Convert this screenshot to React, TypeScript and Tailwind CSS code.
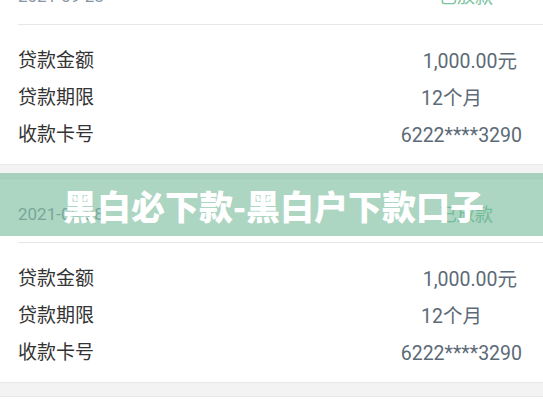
import React from 'react';

interface Row {
  label: string;
  value: string;
  pad: string;
}

const rows: Row[] = [
  { label: '贷款金额', value: '1,000.00元', pad: 'pr-[26px]' },
  { label: '贷款期限', value: '12个月', pad: 'pr-[61px]' },
  { label: '收款卡号', value: '6222****3290', pad: 'pr-[21px]' },
];

const LoanCard: React.FC<{ date: string; status: string }> = ({ date, status }) => (
  <div className="bg-white">
    <div className="h-[63px] flex items-center justify-between pl-[18px] pr-[50px] pt-[8px]">
      <span className="text-[17px] text-[#8a96a3]">{date}</span>
      <span className="text-[18px] text-[#7cc3a0]">{status}</span>
    </div>
    <div className="ml-[18px] border-t border-[#e6e6e6]" />
    <div className="pt-[18px] pb-[10px]">
      {rows.map(r => (
        <div key={r.label} className={`h-[37px] flex items-center justify-between pl-[18px] ${r.pad}`}>
          <span className="text-[19px] text-[#333333]">{r.label}</span>
          <span className="text-[19.5px] text-[#5c6a77]">{r.value}</span>
        </div>
      ))}
    </div>
    <div className="h-[15px] bg-[#f3f3f3] border-y border-[#e8e8e8]" />
  </div>
);

export default function App() {
  return (
    <div
      className="relative w-[543px] h-[408px] overflow-hidden bg-white"
      style={{ fontFamily: 'Roboto, "Noto Sans CJK SC", sans-serif' }}
    >
      <div className="-mt-[39px]">
        <LoanCard date="2021-09-28" status="已放款" />
        <LoanCard date="2021-09-28" status="已放款" />
        <LoanCard date="2021-09-28" status="已放款" />
      </div>

      {/* watermark banner */}
      <div className="absolute left-0 right-0 top-[173px] h-[63px] bg-[rgba(107,180,146,0.56)] flex items-center justify-center">
        <span
          className="text-white text-[34px] font-black leading-none pt-[3px] pl-[4px]"
          style={{ fontFamily: '"Noto Sans CJK SC", sans-serif' }}
        >
          黑白必下款-黑白户下款口子
        </span>
      </div>
    </div>
  );
}
